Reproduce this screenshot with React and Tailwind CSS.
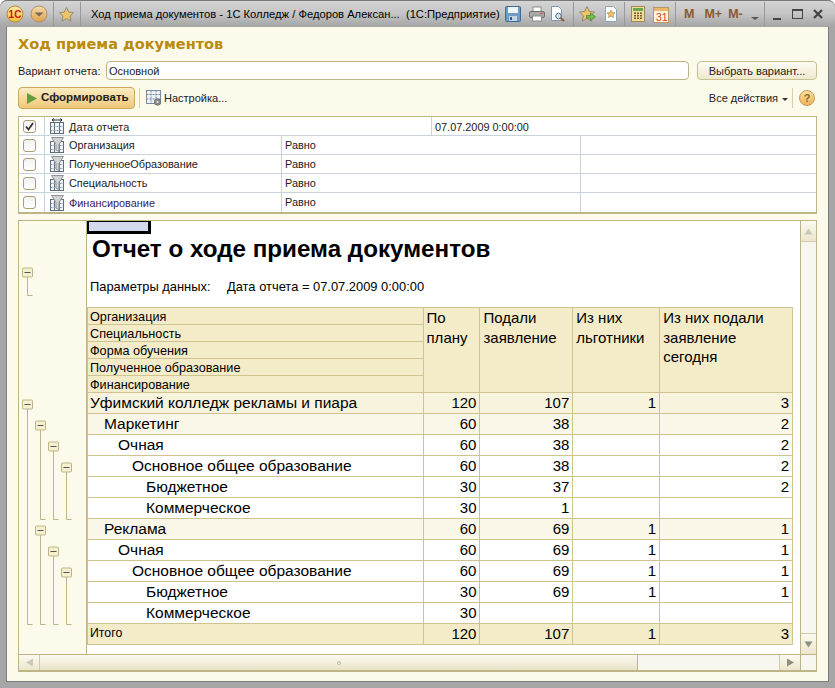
import React from "react";

const F = "font-['Liberation_Sans',Arial,sans-serif]";

function Sep() {
  return <div className="w-px h-[24px] bg-[#989898]" />;
}

function Logo() {
  return (
    <svg width="18" height="18" viewBox="0 0 18 18">
      <defs><linearGradient id="lg" x1="0" y1="0" x2="0" y2="1"><stop offset="0" stopColor="#fbe9a8"/><stop offset="1" stopColor="#f4c12f"/></linearGradient></defs>
      <circle cx="9" cy="9" r="8" fill="url(#lg)" stroke="#b58b3c" />
      <text x="2.6" y="12.5" fontSize="10" fontWeight="700" fill="#d0161b" fontFamily="Liberation Sans">1С</text>
    </svg>
  );
}
function MenuCircle() {
  return (
    <svg width="18" height="18" viewBox="0 0 18 18">
      <defs><linearGradient id="mc" x1="0" y1="0" x2="0" y2="1"><stop offset="0" stopColor="#f5dca8"/><stop offset="1" stopColor="#e0a050"/></linearGradient></defs>
      <circle cx="9" cy="9" r="8" fill="url(#mc)" stroke="#a89470" />
      <path d="M4.5 7.5h9l-4.5 4z" fill="#7a6a50" />
    </svg>
  );
}
function Star({ size = 18, go }) {
  return (
    <svg width={size} height={size} viewBox="0 0 18 18">
      <path d="M9 1.5l2.3 4.9 5.2.7-3.8 3.6 1 5.3L9 13.4 4.3 16l1-5.3L1.5 7.1l5.2-.7z" fill="#eec46a" stroke="#8f8a70" />
      {go && <path d="M8.5 10.5h4V8l5 3.8-5 3.8v-2.5h-4z" fill="#71c04a" stroke="#3e7f2b" strokeWidth=".7" />}
    </svg>
  );
}
function Save() {
  return (
    <svg width="16" height="16" viewBox="0 0 16 16">
      <rect x=".5" y=".5" width="15" height="15" rx="1" fill="#6f9cc6" stroke="#3d6a96" />
      <rect x="3" y="1" width="10" height="6" fill="#eef4fa" />
      <rect x="4" y="10" width="8" height="5" fill="#c7d5e3" />
      <rect x="5" y="11" width="2" height="3" fill="#2f5b86" />
    </svg>
  );
}
function Print() {
  return (
    <svg width="16" height="16" viewBox="0 0 16 16">
      <rect x="4" y="1" width="8" height="5" fill="#fff" stroke="#8a8a8a" />
      <rect x=".5" y="5.5" width="15" height="6" rx="1.5" fill="#a9a9a9" stroke="#6d6d6d" />
      <rect x="3.5" y="10" width="9" height="5" fill="#fff" stroke="#8a8a8a" />
      <rect x="11" y="7" width="3" height="1" fill="#d8503a" />
    </svg>
  );
}
function Preview() {
  return (
    <svg width="16" height="16" viewBox="0 0 16 16">
      <path d="M1.5.5h7l3 3v11h-10z" fill="#fff" stroke="#7d97b3" />
      <circle cx="8.5" cy="10" r="2.8" fill="#cfe0ef" stroke="#5c6f80" />
      <path d="M10.5 12l3.5 3" stroke="#8a5a30" strokeWidth="2" />
    </svg>
  );
}
function StarDoc() {
  return (
    <svg width="16" height="16" viewBox="0 0 16 16">
      <path d="M2.5.5h8l3 3v12h-11z" fill="#fdfdfd" stroke="#8ca5bf" />
      <path d="M8 4l1.2 2.5 2.8.4-2 1.9.5 2.7L8 10.2l-2.5 1.3.5-2.7-2-1.9 2.8-.4z" fill="#edc15f" stroke="#96845a" strokeWidth=".6" />
    </svg>
  );
}
function Calc() {
  return (
    <svg width="14" height="16" viewBox="0 0 14 16">
      <rect x=".5" y=".5" width="13" height="15" fill="#f4dc9b" stroke="#a08a52" />
      <rect x="2" y="2" width="10" height="3" fill="#6aa84f" />
      {[6.5, 9, 11.5].map((y) => [3, 6, 9].map((x) => <rect key={x + "-" + y} x={x} y={y} width="2" height="1.5" fill="#6d5a2f" />))}
    </svg>
  );
}
function Cal() {
  return (
    <svg width="16" height="17" viewBox="0 0 16 17">
      <rect x=".5" y="1.5" width="15" height="15" fill="#fbf3dc" stroke="#b49a62" />
      <rect x="1" y="2" width="14" height="3" fill="#e9b868" />
      <text x="3" y="14.5" fontSize="10.5" fill="#e0401c" fontFamily="Liberation Sans">31</text>
    </svg>
  );
}

function TitleBar() {
  const m = "font-['Liberation_Sans',Arial,sans-serif] font-bold text-[12.5px] text-[#8a5a30] leading-none";
  return (
    <div className="h-[27px] flex items-center rounded-t-[7px] border-t border-[#7b7b7b] bg-gradient-to-b from-[#d4d4d4] via-[#c4c4c4] to-[#a4a4a4]">
      <div className="ml-[6px] flex items-center"><Logo /></div>
      <div className="ml-[6px] flex items-center"><MenuCircle /></div>
      <div className="ml-[5px]"><Sep /></div>
      <div className="ml-[4px] flex"><Star size={17} /></div>
      <div className="ml-[5px]"><Sep /></div>
      <div className={`ml-[10px] w-[414px] text-[11.2px] text-black whitespace-nowrap ${F}`}>Ход приема документов - 1С Колледж / Федоров Алексан...&nbsp; (1С:Предприятие)</div>
      <Save />
      <div className="ml-[8px] flex"><Print /></div>
      <div className="ml-[5px] flex"><Preview /></div>
      <div className="ml-[7px]"><Sep /></div>
      <div className="ml-[4px] flex"><Star size={18} go /></div>
      <div className="ml-[7px] flex"><StarDoc /></div>
      <div className="ml-[5px]"><Sep /></div>
      <div className="ml-[6px] flex"><Calc /></div>
      <div className="ml-[8px] flex"><Cal /></div>
      <div className="ml-[6px]"><Sep /></div>
      <div className={`ml-[8px] ${m}`}>M</div>
      <div className={`ml-[10px] ${m}`}>M+</div>
      <div className={`ml-[6px] ${m}`}>M-</div>
      <div className="ml-[8px] mt-[8px] w-0 h-0 border-x-[4px] border-x-transparent border-t-[3px] border-t-[#555]" />
      <div className="ml-[5px]"><Sep /></div>
      <div className="ml-[8px] mt-[9px] w-[8px] h-[2px] bg-[#444]" />
      <div className="ml-[11px] w-[11px] h-[10px] border border-t-2 border-[#444]" />
      <svg className="ml-[10px]" width="10" height="10" viewBox="0 0 10 10"><path d="M1 1l8 8M9 1l-8 8" stroke="#444" strokeWidth="2.2" /></svg>
    </div>
  );
}

function TableBody({ top }) {
  return (
    <g stroke="#5c6c7d" strokeWidth="1" fill="#e3e9f0">
      <rect x="1.5" y={top + 0.5} width="13" height={15 - top} fill="#f1f4f7" />
      <path d={`M5.5 ${top}v${16 - top}M10.5 ${top}v${16 - top}`} fill="none" />
      <path d={`M1.5 ${top + 4.5}h13M1.5 ${top + 8.5}h13`} fill="none" stroke="#8496a8" strokeDasharray="2 1" />
    </g>
  );
}
function Funnel() {
  return (
    <svg width="16" height="16" viewBox="0 0 16 16">
      <TableBody top={4} />
      <path d="M2.5 .5h12L10 7.5v7l-3-1.5V7.5z" fill="#d2d2d2" stroke="#8d9499" />
    </svg>
  );
}
function DateIcon() {
  return (
    <svg width="16" height="16" viewBox="0 0 16 16">
      <TableBody top={4} />
      <path d="M3 2h10M3 2l2-1.5M3 2l2 1.5M13 2l-2-1.5M13 2l-2 1.5" stroke="#20303f" fill="none" />
    </svg>
  );
}
function Check({ on }) {
  return (
    <div className="w-[13px] h-[13px] rounded-[3px] border border-[#a89f70] bg-gradient-to-b from-[#f1f1f1] to-white flex items-center justify-center">
      {on && (
        <svg width="9" height="9" viewBox="0 0 9 9">
          <path d="M1 4.5l2.5 3L8 1" fill="none" stroke="#333" strokeWidth="1.8" />
        </svg>
      )}
    </div>
  );
}

const filterRows = ["Организация", "ПолученноеОбразование", "Специальность", "Финансирование"];

function FilterTable() {
  const t = `text-[10.9px] text-[#1a1a1a] ${F}`;
  return (
    <div className="mx-[11px] mt-[7px] border border-[#bdb586] border-b-2 bg-white">
      <div className="h-[19px] flex border-b border-[#c9d2dc]">
        <div className="w-[26px] flex items-center pl-[4px] border-r border-[#c9d2dc]"><Check on /></div>
        <div className="w-[387px] flex items-center pl-[4px] border-r border-[#c9d2dc]">
          <DateIcon />
          <span className={`ml-[4px] pt-[2px] ${t}`}>Дата отчета</span>
        </div>
        <div className={`flex-1 flex items-center pl-[3px] pt-[2px] ${t}`}>07.07.2009 0:00:00</div>
      </div>
      {filterRows.map((r, i) => (
        <div key={r} className={`h-[19px] flex ${i < 3 ? "border-b border-[#c9d2dc]" : ""}`}>
          <div className="w-[26px] flex items-center pl-[4px] border-r border-[#c9d2dc]"><Check /></div>
          <div className="w-[237px] flex items-center pl-[4px] border-r border-[#c9d2dc]">
            <Funnel />
            <span className={`ml-[4px] pt-px ${t} ${r === "Финансирование" ? "text-[#3b1a5c] pt-0" : ""}`}>{r}</span>
          </div>
          <div className={`w-[299px] flex items-center pl-[3px] border-r border-[#c9d2dc] ${i < 3 ? "pt-px" : ""} ${t}`}>Равно</div>
          <div className="flex-1" />
        </div>
      ))}
    </div>
  );
}

function Outline() {
  const c = "#bdb586";
  const Box = ({ x, y }) => (
    <g>
      <rect x={x - 5} y={y - 4.5} width="10" height="9" rx="1" fill="#f5f0d0" stroke={c} />
      <path d={`M${x - 3} ${y}h6`} stroke="#555" />
    </g>
  );
  const V = ({ x, y1, y2 }) => <path d={`M${x} ${y1}V${y2}h5`} stroke={c} fill="none" />;
  return (
    <svg width="67" height="433" viewBox="19 220 67 433" className="block">
      <V x={27.5} y1={276} y2={294.5} />
      <V x={27.5} y1={408} y2={623.5} />
      <V x={40.5} y1={429} y2={518.5} />
      <V x={53.5} y1={450} y2={518.5} />
      <V x={66.5} y1={471} y2={518.5} />
      <V x={40.5} y1={534} y2={623.5} />
      <V x={53.5} y1={555} y2={623.5} />
      <V x={66.5} y1={576} y2={623.5} />
      <Box x={27.5} y={271.5} />
      <Box x={27.5} y={403.5} />
      <Box x={40.5} y={424.5} />
      <Box x={53.5} y={445.5} />
      <Box x={66.5} y={466.5} />
      <Box x={40.5} y={529.5} />
      <Box x={53.5} y={550.5} />
      <Box x={66.5} y={571.5} />
    </svg>
  );
}

const colW = ["w-[336px]", "w-[57px]", "w-[93px]", "w-[87px]", "w-[133px]"];
const rows = [
  ["Уфимский колледж рекламы и пиара", 0, "120", "107", "1", "3", "bg-[#f8f3dc]"],
  ["Маркетинг", 1, "60", "38", "", "2", "bg-[#faf7e8]"],
  ["Очная", 2, "60", "38", "", "2", "bg-white"],
  ["Основное общее образование", 3, "60", "38", "", "2", "bg-white"],
  ["Бюджетное", 4, "30", "37", "", "2", "bg-white"],
  ["Коммерческое", 4, "30", "1", "", "", "bg-white"],
  ["Реклама", 1, "60", "69", "1", "1", "bg-[#faf7e8]"],
  ["Очная", 2, "60", "69", "1", "1", "bg-white"],
  ["Основное общее образование", 3, "60", "69", "1", "1", "bg-white"],
  ["Бюджетное", 4, "30", "69", "1", "1", "bg-white"],
  ["Коммерческое", 4, "30", "", "", "", "bg-white"],
];
const indents = ["pl-[2px]", "pl-[16px]", "pl-[30px]", "pl-[44px]", "pl-[58px]"];

function ReportTable() {
  const cell = "border-r border-b border-[#cfc48f] box-border";
  const txt = "text-[15.5px] text-black leading-[19px]";
  const num = "text-[15px] text-black leading-[19px]";
  return (
    <div className={`w-[706px] border-t border-l border-[#cfc48f] ${F}`}>
      <div className="flex h-[85px] bg-[#f4ecc8]">
        <div className={`${colW[0]} flex flex-col border-r border-[#cfc48f]`}>
          {["Организация", "Специальность", "Форма обучения", "Полученное образование", "Финансирование"].map((h) => (
            <div key={h} className="h-[17px] border-b border-[#cfc48f] pl-[2px] text-[12.67px] leading-[18px] text-black">{h}</div>
          ))}
        </div>
        {["По плану", "Подали заявление", "Из них льготники", "Из них подали заявление сегодня"].map((h, i) => (
          <div key={h} className={`${colW[i + 1]} ${cell} px-[3px] text-[15px] leading-[19.5px] text-black`}>{h}</div>
        ))}
      </div>
      {rows.map((r, idx) => (
        <div key={idx} className={`flex h-[21px] ${r[6]}`}>
          <div className={`${colW[0]} ${cell} ${indents[r[1]]} ${txt} whitespace-nowrap`}>{r[0]}</div>
          {[2, 3, 4, 5].map((k, j) => (
            <div key={k} className={`${colW[j + 1]} ${cell} text-right pr-[3px] ${num}`}>{r[k]}</div>
          ))}
        </div>
      ))}
      <div className="flex h-[21px] bg-[#f4ecc8]">
        <div className={`${colW[0]} ${cell} pl-[2px] text-[12.3px] leading-[19px] text-black`}>Итого</div>
        {["120", "107", "1", "3"].map((v, j) => (
          <div key={j} className={`${colW[j + 1]} ${cell} text-right pr-[3px] ${num}`}>{v}</div>
        ))}
      </div>
    </div>
  );
}

function ScrollArrow({ d, color = "#c9c9b5" }) {
  return (
    <svg width="9" height="9" viewBox="0 0 9 9">
      <path d={d} fill={color} />
    </svg>
  );
}

function Report() {
  return (
    <div className="mx-[11px] mt-[6px] h-[452px] border border-[#bdb586] border-b-2 flex flex-col">
      <div className="flex h-[433px]">
        <div className="w-[68px] shrink-0 border-r border-[#bdb586] bg-[#fbfaeb]">
          <Outline />
        </div>
        <div className="flex-1 bg-white overflow-hidden">
          <div className="w-[64px] h-[13px] border-[2px] border-t border-b-[3px] border-r-[3px] border-black bg-[#d5d9ee]" />
          <div className={`pl-[5px] mt-[1px] text-[24.2px] font-bold leading-[28px] text-black whitespace-nowrap ${F}`}>Отчет о ходе приема документов</div>
          <div className={`flex pl-[3px] mt-[16px] text-[12.9px] leading-[16px] text-black whitespace-nowrap ${F}`}>
            <span className="w-[137px]">Параметры данных:</span>
            <span>Дата отчета = 07.07.2009 0:00:00</span>
          </div>
          <div className="h-[12px]" />
          <ReportTable />
        </div>
        <div className="w-[16px] shrink-0 border-l border-[#bdb586] bg-[#f8f7ef] flex flex-col justify-between">
          <div className="h-[21px] border-b border-[#cfcbae] bg-gradient-to-b from-[#fbfaf0] to-[#ece6cd] flex items-center justify-center">
            <ScrollArrow d="M4.5 1.5l4 6h-8z" />
          </div>
          <div className="h-[21px] border-t border-[#cfcbae] bg-gradient-to-b from-[#fbfaf0] to-[#ece6cd] flex items-center justify-center">
            <ScrollArrow d="M.5 1.5h8l-4 6z" color="#8f8f80" />
          </div>
        </div>
      </div>
      <div className="h-[16px] border-t border-[#bdb586] flex bg-[#f8f7ef]">
        <div className="w-[21px] border-r border-[#cfcbae] bg-gradient-to-b from-[#fbfaf0] to-[#ece6cd] flex items-center justify-center">
          <ScrollArrow d="M1 4.5l7-4v8z" />
        </div>
        <div className="w-[598px] border-r border-[#bdb586] bg-gradient-to-b from-[#fbfaf0] to-[#e9e3c8] flex items-center justify-center">
          <div className="w-[4px] h-[4px] border border-[#bbb] rounded-full" />
        </div>
        <div className="flex-1" />
        <div className="w-[21px] border-l border-[#cfcbae] bg-gradient-to-b from-[#fbfaf0] to-[#ece6cd] flex items-center justify-center">
          <ScrollArrow d="M1 .5l7 4-7 4z" color="#8f8f80" />
        </div>
        <div className="w-[16px] border-l border-[#bdb586]" />
      </div>
    </div>
  );
}

export default function App() {
  const t11 = `text-[11px] text-[#222] ${F}`;
  return (
    <div className="w-[835px] h-[688px] overflow-hidden bg-white">
      <div className="h-[688px] bg-[#a6a6a6] rounded-t-[7px] flex flex-col">
        <TitleBar />
        <div className="mx-[6px] h-[655px] bg-[#fbfaeb] border-x border-b border-[#7d7d7d] flex flex-col">
          <div className="pl-[11px] pt-[7px] h-[32px] text-[14.5px] font-bold text-[#b98a0e] leading-[20px] font-['DejaVu_Sans',sans-serif]">Ход приема документов</div>
          <div className="flex items-center h-[19px] mt-[2px] px-[11px]">
            <span className={`w-[88px] pt-px ${t11}`}>Вариант отчета:</span>
            <div className={`w-[583px] h-[19px] rounded-[4px] border border-[#bdb586] bg-white pl-[2px] leading-[18px] ${t11}`}>Основной</div>
            <div className={`ml-[8px] w-[120px] h-[19px] rounded-[4px] border border-[#c9c08f] bg-gradient-to-b from-[#fdfcf3] to-[#efe9cd] text-center leading-[18px] ${t11}`}>Выбрать вариант...</div>
          </div>
          <div className="flex items-center h-[22px] mt-[7px] px-[11px]">
            <div className={`w-[117px] h-[22px] rounded-[4px] border border-[#c9a95a] bg-gradient-to-b from-[#fcecc0] to-[#eec878] flex items-center pl-[8px] text-[11.5px] font-bold text-[#222] ${F}`}>
              <svg width="10" height="11" viewBox="0 0 10 11"><path d="M0 0l10 5.5L0 11z" fill="#5f9f3a" /></svg>
              <span className="ml-[4px]">Сформировать</span>
            </div>
            <div className="ml-[4px] w-px h-[20px] bg-[#d6cfa8]" />
            <div className="ml-[6px] flex">
              <svg width="16" height="16" viewBox="0 0 16 16">
                <g stroke="#7a8ba0" fill="#eef2f6">
                  <rect x=".5" y=".5" width="14" height="13" />
                  <path d="M5 .5v13M10 .5v13M.5 4.5h14M.5 9h14" fill="none" strokeDasharray="2 1" />
                </g>
                <circle cx="11.5" cy="12" r="3.2" fill="#8a8a8a" stroke="#777" />
                <circle cx="11.5" cy="12" r="1" fill="#eee" />
              </svg>
            </div>
            <span className={`ml-[2px] ${t11}`}>Настройка...</span>
            <span className={`ml-auto ${t11}`}>Все действия</span>
            <div className="ml-[4px] mt-[2px] w-0 h-0 border-x-[3px] border-x-transparent border-t-[3px] border-t-[#333]" />
            <div className="ml-[4px] w-px h-[20px] bg-[#d6cfa8]" />
            <div className={`ml-[6px] mr-[2px] w-[16px] h-[16px] rounded-full border border-[#c99b4c] bg-gradient-to-b from-[#fbdf9d] to-[#eeb45a] text-center text-[11px] font-bold leading-[14px] text-[#8b6a2b] ${F}`}>?</div>
          </div>
          <FilterTable />
          <Report />
        </div>
      </div>
    </div>
  );
}
